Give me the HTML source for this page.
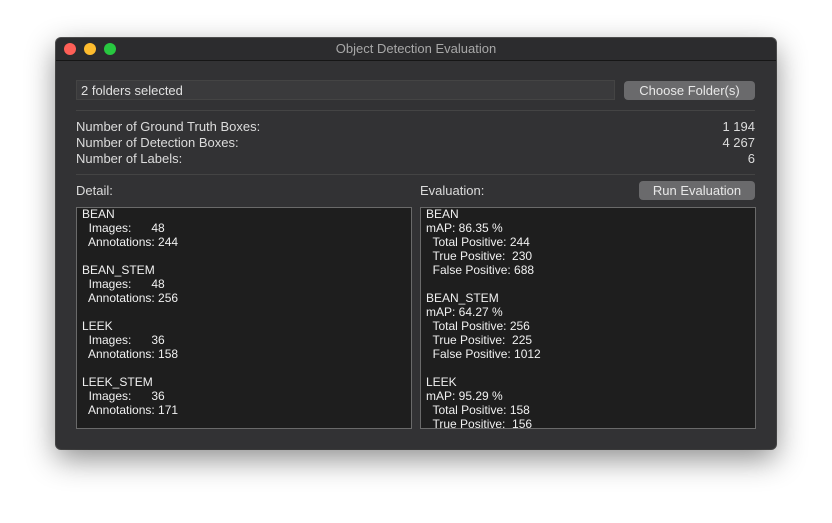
<!DOCTYPE html><html><head><style>
body{margin:0;width:832px;height:523px;background:#fff;position:relative;overflow:hidden;font-family:"Liberation Sans",sans-serif}
.win{position:absolute;left:56px;top:38px;width:720px;height:411px;background:#323234;border-radius:5px;box-shadow:0 10px 30px rgba(0,0,0,.45),0 0 0 1px #555;overflow:hidden}
.tb{height:22px;background:#2c2c2e;border-bottom:1px solid #161616;color:#a8a8a8;font-size:13px;text-align:center;line-height:22px}
.dot{position:absolute;top:5px;width:12px;height:12px;border-radius:50%}
.a{position:absolute;color:#dcdcdc;font-size:13px}
.field{position:absolute;left:20px;top:42px;width:539px;height:20px;background:#3a3a3c;border:1px solid #444;color:#e0e0e0;font-size:13px;line-height:20px;padding-left:4px;box-sizing:border-box}
.btn{position:absolute;background:#6a6a6c;color:#e8e8e8;font-size:13px;text-align:center;border-radius:4px;height:19px;line-height:19px}
.sep{position:absolute;left:20px;width:679px;height:1px;background:#444}
.box{position:absolute;top:169px;height:222px;background:#1e1e1e;border:1px solid #6a6a6a;box-sizing:border-box;color:#f0f0f0;font-size:12px;line-height:14px;padding:0 5px;white-space:pre;overflow:hidden}
.box div{margin-top:-1px}
</style></head><body>
<div class="win">
<div class="tb">Object Detection Evaluation</div>
<div class="dot" style="left:8px;background:#fe5f57"></div>
<div class="dot" style="left:28px;background:#febc2e"></div>
<div class="dot" style="left:48px;background:#28c840"></div>
<div class="field">2 folders selected</div>
<div class="btn" style="left:568px;top:43px;width:131px">Choose Folder(s)</div>
<div class="sep" style="top:72px"></div>
<div class="a" style="left:20px;top:81px;line-height:16px">Number of Ground Truth Boxes:<br>Number of Detection Boxes:<br>Number of Labels:</div>
<div class="a" style="right:21px;top:81px;line-height:16px;text-align:right">1 194<br>4 267<br>6</div>
<div class="sep" style="top:136px"></div>
<div class="a" style="left:20px;top:145px">Detail:</div>
<div class="a" style="left:364px;top:145px">Evaluation:</div>
<div class="btn" style="left:583px;top:143px;width:116px">Run Evaluation</div>
<div class="box" style="left:20px;width:336px"><div>BEAN
  Images:      48
  Annotations: 244

BEAN_STEM
  Images:      48
  Annotations: 256

LEEK
  Images:      36
  Annotations: 158

LEEK_STEM
  Images:      36
  Annotations: 171</div></div>
<div class="box" style="left:364px;width:336px"><div>BEAN
mAP: 86.35 %
  Total Positive: 244
  True Positive:  230
  False Positive: 688

BEAN_STEM
mAP: 64.27 %
  Total Positive: 256
  True Positive:  225
  False Positive: 1012

LEEK
mAP: 95.29 %
  Total Positive: 158
  True Positive:  156</div></div>
</div>
</body></html>
